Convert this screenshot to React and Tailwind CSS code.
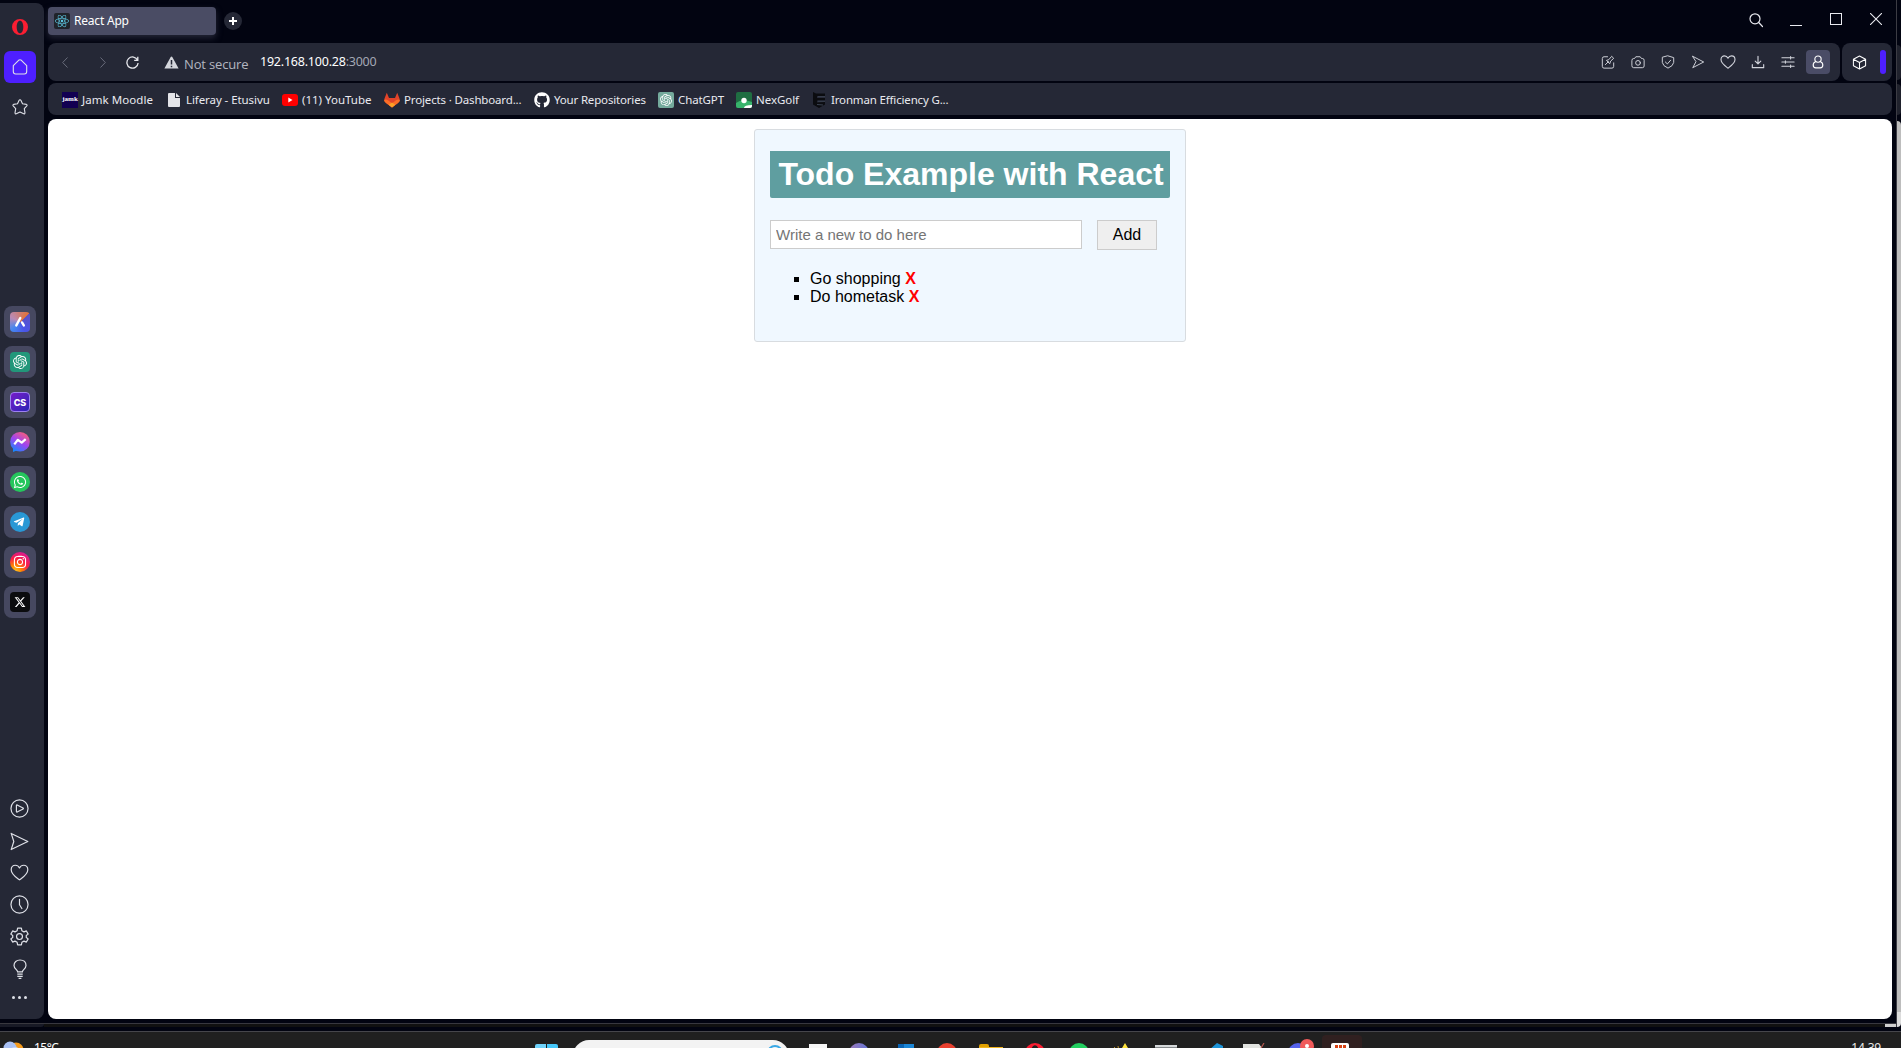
import React from "react";
import { SiOpenai } from "react-icons/si";
import { FaReact, FaWhatsapp, FaTelegramPlane, FaInstagram, FaGithub } from "react-icons/fa";
import { FaXTwitter } from "react-icons/fa6";

function Line({ size = 16, children, className = "", sw = 1.1 }) {
  return (
    <svg
      width={size}
      height={size}
      viewBox="0 0 16 16"
      fill="none"
      stroke="currentColor"
      strokeWidth={sw}
      strokeLinejoin="round"
      strokeLinecap="round"
      className={`shrink-0 ${className}`}
    >
      {children}
    </svg>
  );
}

const heart = (
  <path d="M8 14.2C6 12.6 1 9.6 1 5.6 1 3.4 2.6 1.9 4.5 1.9 6 1.9 7.3 2.8 8 4.2 8.7 2.8 10 1.9 11.5 1.9 13.4 1.9 15 3.4 15 5.6 15 9.6 10 12.6 8 14.2Z" />
);
const plane = <path d="M1 1.2 15 8 1 14.8 3.2 8Z" />;

function OperaRing({ className }) {
  return (
    <svg viewBox="0 0 16 16" className={className}>
      <path
        fillRule="evenodd"
        fill="#fa1e32"
        d="M8 0a8 8 0 1 0 0 16A8 8 0 1 0 8 0ZM8 1.7C10 1.7 11.3 4.4 11.3 8S10 14.3 8 14.3 4.7 11.6 4.7 8 6 1.7 8 1.7Z"
      />
    </svg>
  );
}

function AppTile({ children }) {
  return (
    <div className="flex h-8 w-8 items-center justify-center rounded-lg bg-[#464860]">{children}</div>
  );
}

function Sidebar() {
  return (
    <aside className="mt-[3px] flex h-[1016px] w-11 shrink-0 flex-col rounded-r-lg bg-[#252836] pl-1 text-[#dfe1e8]">
      <div className="flex h-12 w-8 items-center justify-center">
        <OperaRing className="h-4 w-4" />
      </div>
      <div className="flex h-8 w-8 items-center justify-center rounded-md bg-[#4e1fff]">
        <Line>
          <path d="M1.3 6.6 6.6 1.3Q8 .2 9.4 1.3L14.7 6.6V12.6Q14.7 15 12.3 15H3.7Q1.3 15 1.3 12.6Z" />
        </Line>
      </div>
      <div className="flex h-12 w-8 items-center justify-center">
        <Line>
          <path d="M8 .8Q8.7.8 9 1.5L10.5 4.8 14.4 5.4Q15.6 5.8 14.8 6.9L12.3 9.6 13 13.8Q13 15.2 11.7 14.8L8 13.1 4.3 14.8Q3 15.2 3 13.8L3.7 9.6 1.2 6.9Q.4 5.8 1.6 5.4L5.5 4.8 7 1.5Q7.3.8 8 .8Z" />
        </Line>
      </div>
      <div className="mt-[175px] flex flex-col gap-2">
        <AppTile>
          <div className="flex h-5 w-5 items-center justify-center rounded bg-[conic-gradient(from_45deg,#5b52c4,#4a55e8_30%,#4587f0_50%,#b98ab5_70%,#dd7340)]">
            <svg viewBox="0 0 20 20" className="h-5 w-5" fill="none" stroke="#fff" strokeWidth="2.4" strokeLinecap="round">
              <path d="M6.3 13.4 10.3 6M12 10.4 13.8 13.4" />
            </svg>
          </div>
        </AppTile>
        <AppTile>
          <div className="flex h-5 w-5 items-center justify-center rounded bg-[#22977a] text-white">
            <SiOpenai size={14} />
          </div>
        </AppTile>
        <AppTile>
          <div className="flex h-5 w-5 items-center justify-center rounded border border-[#9d82f0] bg-linear-to-br from-[#7619c9] to-[#2721b5] font-['Inter'] text-[9px] leading-none font-extrabold text-white">
            CS
          </div>
        </AppTile>
        <AppTile>
          <svg viewBox="0 0 20 20" className="h-5 w-5">
            <defs>
              <linearGradient id="msg" x1=".2" y1="1" x2=".8" y2="0">
                <stop offset="0" stopColor="#1688ff" />
                <stop offset=".5" stopColor="#a044f0" />
                <stop offset="1" stopColor="#ff5f72" />
              </linearGradient>
            </defs>
            <path d="M3 14V20L8 18Z" fill="#1688ff" />
            <circle cx="10" cy="9.8" r="9.8" fill="url(#msg)" />
            <path d="m4.3 12.4 3.6-4.6 3.8 2.9 4-3.5" fill="none" stroke="#fff" strokeWidth="2.2" strokeLinejoin="round" />
          </svg>
        </AppTile>
        <AppTile>
          <div className="flex h-5 w-5 items-center justify-center rounded-full bg-[#25c65c] text-white">
            <FaWhatsapp size={14} />
          </div>
        </AppTile>
        <AppTile>
          <div className="flex h-5 w-5 items-center justify-center rounded-full bg-[#2998d5] text-white">
            <FaTelegramPlane size={12} className="mr-0.5" />
          </div>
        </AppTile>
        <AppTile>
          <div className="flex h-5 w-5 items-center justify-center rounded-full bg-[radial-gradient(circle_at_25%_100%,#ffca28_0%,#ff8a00_25%,#fb1c48_55%,#c41bb8_100%)] text-white">
            <FaInstagram size={14} />
          </div>
        </AppTile>
        <AppTile>
          <div className="flex h-5 w-5 items-center justify-center rounded bg-[#0b0c0e] text-white">
            <FaXTwitter size={12} />
          </div>
        </AppTile>
      </div>
      <div className="mt-[181px] flex flex-col pl-1.5">
        <Line size={19} sw={1}>
          <circle cx="8" cy="8" r="7.2" />
          <path d="M5.4 5.4Q5.4 4.8 6 5L11 7.5Q11.6 8 11 8.5L6 11Q5.4 11.2 5.4 10.6Z" />
        </Line>
        <Line size={19} sw={1} className="mt-[14px]">{plane}</Line>
        <Line size={19} sw={1} className="mt-3">{heart}</Line>
        <Line size={19} sw={1} className="mt-[13px]">
          <circle cx="8" cy="8" r="7.2" />
          <path d="M8 3.6V8.2L10 11.4" />
        </Line>
        <Line size={19} sw={1} className="mt-[13px]">
          <path d="M6.4 1H9.6L10 3.1 11.8 4.1 13.8 3.3 15.3 6 13.7 7.2V8.8L15.3 10 13.8 12.7 11.8 11.9 10 12.9 9.6 15H6.4L6 12.9 4.2 11.9 2.2 12.7.7 10 2.3 8.8V7.2L.7 6 2.2 3.3 4.2 4.1 6 3.1Z" />
          <circle cx="8" cy="8" r="2.5" />
        </Line>
        <svg viewBox="0 0 14 20" className="mt-[13px] ml-[3px] h-5 w-[14px]" fill="none" stroke="currentColor" strokeWidth="1.2">
          <path d="M4.6 12.8C4.6 10.7 1 9.6 1 6.4 1 3 3.6 1 7 1S13 3 13 6.4C13 9.6 9.4 10.7 9.4 12.8ZM4.3 15.1H9.7M4.3 17.3H9.7M5.6 19.4H8.4" />
        </svg>
        <div className="mt-[17px] flex gap-[3px] pl-0.5">
          <i className="h-[3px] w-[3px] rounded-full bg-[#dfe1e8]" />
          <i className="h-[3px] w-[3px] rounded-full bg-[#dfe1e8]" />
          <i className="h-[3px] w-[3px] rounded-full bg-[#dfe1e8]" />
        </div>
      </div>
    </aside>
  );
}

function TabStrip() {
  return (
    <div className="flex h-[43px] items-start text-[#e9eaf0]">
      <div className="mt-[7px] flex h-7 w-[168px] items-center rounded bg-[#4a4c64] pl-1.5 shadow-[0_3px_6px_#252738]">
        <span className="flex h-4 w-4 items-center justify-center rounded-xs bg-[#20232a] text-[#5cc6e0]">
          <FaReact size={14} />
        </span>
        <span className="ml-1 text-[12px] tracking-[-0.2px] text-white">React App</span>
      </div>
      <div className="mt-3 ml-2 flex h-[18px] w-[18px] items-center justify-center rounded-full bg-[#252836]">
        <svg viewBox="0 0 8 8" className="h-2 w-2" stroke="#fff" strokeWidth="2">
          <path d="M4 0V8M0 4H8" />
        </svg>
      </div>
      <div className="mt-[10px] mr-[10px] ml-auto flex items-center">
        <Line size={16} sw={1.2} className="mt-0.5">
          <circle cx="7" cy="6.8" r="5" />
          <path d="M10.7 10.5 14.5 14.5" />
        </Line>
        <div className="mt-3 ml-[26px] h-px w-3 bg-[#e9eaf0]" />
        <div className="ml-7 h-3 w-3 border border-[#e9eaf0]" />
        <svg viewBox="0 0 12 12" className="ml-7 h-3 w-3" stroke="currentColor" strokeWidth="1.1">
          <path d="M0 0 12 12M12 0 0 12" />
        </svg>
      </div>
    </div>
  );
}

function Toolbar() {
  return (
    <div className="flex h-[38px] gap-[2px] text-[#d2d4dc]">
      <div className="flex flex-1 items-center rounded-lg bg-[#252836] pr-2.5 pl-[14px]">
        <svg viewBox="0 0 6 11" className="h-[11px] w-1.5 text-[#696c7b]" fill="none" stroke="currentColor">
          <path d="M5.5.5.7 5.5 5.5 10.5" />
        </svg>
        <svg viewBox="0 0 6 11" className="ml-8 h-[11px] w-1.5 text-[#696c7b]" fill="none" stroke="currentColor">
          <path d="M.5.5 5.3 5.5.5 10.5" />
        </svg>
        <svg viewBox="0 0 13 13" className="ml-5 h-[13px] w-[13px] text-[#e6e7ec]" fill="none" stroke="currentColor" strokeWidth="1.3">
          <path d="M11.6 4.2A5.6 5.6 0 1 0 12.1 7M11.8.8V4.4H8.2" />
        </svg>
        <svg viewBox="0 0 15 13" className="mt-px ml-[25px] h-[13px] w-[15px]">
          <path d="M7.5.4Q8 .4 8.3 1L14.6 12.5H.4L6.7 1Q7 .4 7.5.4Z" fill="#d4d6dc" />
          <path d="M7.5 4V8.5M7.5 9.8V11.2" stroke="#252836" strokeWidth="1.5" />
        </svg>
        <span className="mt-[5px] ml-[5px] w-[76px] font-['Open_Sans'] text-[13px] tracking-[-0.15px] whitespace-nowrap text-[#b3b6c0]">
          Not secure
        </span>
        <span className="mt-px text-[12.5px] tracking-[-0.22px] whitespace-nowrap text-white">
          192.168.100.28<span className="text-[#a3a7b4]">:3000</span>
        </span>
        <div className="ml-auto flex items-center gap-4">
          <Line size={14}>
            <path d="M7.5 2H3.5Q1.5 2 1.5 4V13Q1.5 15 3.5 15H12.5Q14.5 15 14.5 13V9M5 11 8.5 7.5M6.5 6.5 10 10 11 7 14.5 3.8 12.2 1.5 9.2 5Z" />
          </Line>
          <Line size={14}>
            <path d="M1 6Q1 4 3 4H4L5.5 2H10.5L12 4H13Q15 4 15 6V12.5Q15 14.5 13 14.5H3Q1 14.5 1 12.5Z" />
            <circle cx="8" cy="9" r="2.7" />
          </Line>
          <Line size={14}>
            <path d="M8 1 14.5 3V8.5Q14 12.5 8 15 2 12.5 1.5 8.5V3ZM5 8 7.3 10.2 11 6" />
          </Line>
          <Line size={14}><path d="M2 1.5 14.5 8 2 14.5 5.5 8Z" /></Line>
          <Line size={16} className="-mx-px">{heart}</Line>
          <Line size={14} sw={1.3}>
            <path d="M8 1.5V10M4.8 7 8 10.2 11.2 7M1.5 11V14.5H14.5V11" />
          </Line>
          <Line size={14} sw={1.2}>
            <path d="M1 3.2H15M1 8H15M1 12.8H15M11 1.8V4.6M5 6.6V9.4M11 11.4V14.2" />
          </Line>
          <div className="-ml-[5px] flex h-6 w-6 items-center justify-center rounded bg-[#4a4c66] text-white">
            <Line size={14} sw={1.3}>
              <circle cx="8" cy="4.7" r="3.6" />
              <path d="M5.5 7.4Q2.5 8.5 2.5 11.5 2.5 14.7 5.5 14.7H10.5Q13.5 14.7 13.5 11.5 13.5 8.5 10.5 7.4" />
            </Line>
          </div>
        </div>
      </div>
      <div className="flex w-[50px] items-center rounded-lg bg-[#252836] pl-2.5">
        <Line size={15} className="text-white">
          <path d="M8 1 14.5 4.5V11.5L8 15 1.5 11.5V4.5ZM1.5 4.5 8 8 14.5 4.5M8 8V15" />
        </Line>
        <div className="ml-[13px] h-6 w-1.5 rounded-sm bg-[#4e1fff]" />
      </div>
    </div>
  );
}

function Bookmark({ icon, label, className = "", text }) {
  return (
    <div className={`flex shrink-0 items-center gap-1 ${className}`}>
      <span className="flex h-4 w-4 shrink-0 items-center justify-center">{icon}</span>
      <span className={`whitespace-nowrap ${text}`}>{label}</span>
    </div>
  );
}

function Bookmarks() {
  return (
    <div className="mt-[2px] flex h-8 items-center rounded-lg bg-[#252836] pt-px pl-[14px] text-[11.5px] text-[#e9eaf0]">
      <Bookmark
        className="w-[104px]"
        text="tracking-[0.06px]"
        label="Jamk Moodle"
        icon={<span className="flex h-4 w-4 items-center justify-center bg-[#120052] font-['Liberation_Serif'] text-[7px] leading-none font-bold text-white">jamk</span>}
      />
      <Bookmark
        className="w-[116px]"
        text="tracking-[-0.08px]"
        label="Liferay - Etusivu"
        icon={
          <svg viewBox="0 0 12 14" className="h-[14px] w-3">
            <path d="M0 1Q0 0 1 0H7V5H12V13Q12 14 11 14H1Q0 14 0 13ZM8 0 12 4H8Z" fill="#e3e4e8" />
          </svg>
        }
      />
      <Bookmark
        className="w-[102px]"
        text="tracking-[0px]"
        label="(11) YouTube"
        icon={
          <svg viewBox="0 0 16 12" className="h-3 w-4">
            <rect width="16" height="12" rx="3" fill="#f00" />
            <path d="M6.3 3.5 10.5 6 6.3 8.5Z" fill="#fff" />
          </svg>
        }
      />
      <Bookmark
        className="w-[150px]"
        text="tracking-[-0.15px]"
        label="Projects · Dashboard..."
        icon={
          <svg viewBox="0 0 16 16" className="h-4 w-4">
            <path d="M2.8.8 5 6H11L13.2.8 15.5 6.5Q16.3 9 14 11L8 15.5 2 11Q-.3 9 .5 6.5Z" fill="#e24329" />
            <path d="M0 8Q2 7 4 8.3L8 11.3 12 8.3Q14 7 16 8 16 9.5 14 11L8 15.5 2 11Q0 9.5 0 8Z" fill="#fc6d26" />
            <path d="M4.8 12.8 8 10.5 11.2 12.8 8 15.5Z" fill="#fca326" />
          </svg>
        }
      />
      <Bookmark className="w-[124px]" text="tracking-[-0.17px]" label="Your Repositories" icon={<FaGithub size={16} color="#fff" />} />
      <Bookmark
        className="w-[78px]"
        text="tracking-[-0.1px]"
        label="ChatGPT"
        icon={<span className="flex h-4 w-4 items-center justify-center rounded-xs bg-[#74aa9c] text-white"><SiOpenai size={12} /></span>}
      />
      <Bookmark
        className="w-[75px]"
        text="tracking-[-0.05px]"
        label="NexGolf"
        icon={
          <svg viewBox="0 0 16 16" className="h-4 w-4">
            <rect width="16" height="16" rx="2" fill="#1f6e42" />
            <path d="M0 11Q6 6 16 10V14Q16 16 14 16H2Q0 16 0 14Z" fill="#37b36b" />
            <circle cx="8" cy="8.5" r="2.7" fill="#fff" />
            <path d="M8 16Q8 13 16 13V14Q16 16 14 16Z" fill="#fff" />
          </svg>
        }
      />
      <Bookmark
        text="tracking-[-0.16px]"
        label="Ironman Efficiency G..."
        icon={
          <svg viewBox="0 0 14 16" className="h-4 w-[14px]">
            <path d="M1 0 4 1.5H13V4H5V6H13V8.5H5V10.5L13 10V12.5L7 16 1 12.5Z" fill="#0b0c10" />
            <path d="M6 4.7H13M6 9.2H13M5 12.5 11 13" stroke="#3b4352" />
          </svg>
        }
      />
    </div>
  );
}

function TodoPage() {
  return (
    <main className="mt-1 flex h-[900px] justify-center rounded-lg bg-white pt-[10px] font-['Liberation_Sans',Arial,sans-serif] text-black">
      <div className="h-[213px] w-[432px] rounded-[3px] border border-[#d8dce0] bg-[#f0f8ff] px-[15px] pt-[21px]">
        <h1 className="h-[47px] rounded-b-xs bg-[#5f9ea0] pl-0.5 text-center text-[32px] leading-[47px] font-bold whitespace-nowrap text-white">
          Todo Example with React
        </h1>
        <div className="mt-[22px] flex items-start gap-[15px]">
          <input
            className="h-[29px] w-[312px] border border-[#ccc] bg-white px-[5px] text-[15px] placeholder:text-[#757575]"
            placeholder="Write a new to do here"
          />
          <button className="h-[30px] w-[60px] border border-[#ccc] bg-[#efefef] text-[16px] leading-none">Add</button>
        </div>
        <ul className="mt-5 list-[square] pl-10 text-[16px] leading-[18px]">
          <li>Go shopping <b className="text-[#f00]">X</b></li>
          <li>Do hometask <b className="text-[#f00]">X</b></li>
        </ul>
      </div>
    </main>
  );
}

function Taskbar() {
  return (
    <footer className="flex h-[17px] shrink-0 items-start overflow-hidden border-t border-[#46464c] bg-[#202020] text-white">
      <svg viewBox="0 0 22 16" className="mt-[9px] ml-[3px] h-4 w-[22px] shrink-0">
        <circle cx="13" cy="9" r="7.5" fill="#f59b1c" />
        <circle cx="7" cy="7" r="6.5" fill="#a9c1f4" />
        <circle cx="12" cy="12" r="6" fill="#c8d8fa" />
      </svg>
      <span className="mt-[8px] ml-[9px] w-6 shrink-0 text-[12px] leading-[16px] tracking-[-0.5px]">15°C</span>
      <div className="mt-3 ml-[477px] flex shrink-0 gap-px">
        <i className="h-3 w-[11px] rounded-tl-xs bg-[#6fd3fb]" />
        <i className="h-3 w-[11px] rounded-tr-xs bg-[#46c8fa]" />
      </div>
      <div className="mt-2 ml-[15px] flex h-8 w-[216px] shrink-0 justify-end rounded-full bg-[#f3f3f3] pt-[5px] pr-[6px]">
        <i className="h-4 w-4 rounded-full border-2 border-[#38a8e6]" />
      </div>
      <i className="mt-3 ml-5 h-4 w-[18px] shrink-0 bg-[#f6f6f6]" />
      <i className="mt-[11px] ml-[22px] h-5 w-5 shrink-0 rounded-full bg-linear-to-r from-[#9b78b8] to-[#6274d6]" />
      <i className="mt-3 ml-[29px] h-4 w-4 shrink-0 border-l-[6px] border-[#0a64b4] bg-[#1b86d6]" />
      <i className="mt-[11px] ml-[23px] h-5 w-5 shrink-0 rounded-full bg-[#e8402f]" />
      <div className="mt-3 ml-[22px] h-4 w-6 shrink-0">
        <div className="h-[3px] w-2.5 rounded-t-xs bg-[#e0a000]" />
        <div className="h-3 w-6 bg-[#f0b41e]" />
      </div>
      <OperaRing className="mt-[11px] ml-[22px] h-5 w-5 shrink-0" />
      <i className="mt-[11px] ml-6 h-5 w-5 shrink-0 rounded-full bg-[#22cf60]" />
      <svg viewBox="0 0 18 16" className="mt-[11px] ml-6 h-4 w-[18px] shrink-0">
        <path d="M12 0 15 5H18V16H6V6L9 5Z" fill="#ffe23c" />
        <path d="M1 4 5 8M5 3 6 8" stroke="#b8902a" />
      </svg>
      <i className="mt-[13px] ml-[24px] h-4 w-[22px] shrink-0 border-t-2 border-[#d5d8da] bg-[#84888b]" />
      <svg viewBox="0 0 14 16" className="mt-[11px] ml-[32px] h-4 w-[14px] shrink-0">
        <path d="M8 0 14 3V16H0V7Z" fill="#1d94d8" />
      </svg>
      <svg viewBox="0 0 22 16" className="mt-[11px] ml-[20px] h-4 w-[22px] shrink-0">
        <path d="M0 1H16L19 5V16H0Z" fill="#e2e3e0" />
        <path d="M21 0 18 5" stroke="#b5574d" strokeWidth="1.2" />
      </svg>
      <div className="mt-[7px] ml-[23px] flex h-5 w-[26px] shrink-0">
        <i className="mt-1 h-5 w-5 shrink-0 rounded-full bg-[#5562ea]" />
        <i className="-ml-2 h-[14px] w-[14px] shrink-0 rounded-full border-[5px] border-[#f05a5a] bg-white" />
      </div>
      <div className="mt-[3px] ml-[8px] flex h-6 w-10 shrink-0 justify-center rounded-t bg-[#302020] pt-2">
        <div className="-ml-1 flex h-4 w-[18px] justify-center gap-px rounded-t-xs bg-white pt-0.5">
          <i className="h-4 w-[3px] bg-[#d84315]" />
          <i className="h-4 w-[3px] bg-[#d84315]" />
          <i className="h-4 w-[3px] bg-[#d84315]" />
        </div>
      </div>
      <span className="mt-[8px] mr-[20px] ml-auto text-[12px] leading-[16px] tracking-[-0.2px] text-[#e8e8e8]">14.39</span>
    </footer>
  );
}

function WindowEdge() {
  return (
    <div className="ml-1 flex h-[1027px] w-[5px] shrink-0 flex-col rounded-tr-lg rounded-br-xl border-l border-[#3c3c44]">
      <div className="mt-[45px] h-[35px] rounded-r bg-[#20222d]" />
      <div className="mt-1 h-[31px] rounded-r bg-[#20222d]" />
      <div className="mt-[6px] h-[891px] rounded-tr bg-[#bdbdbd]" />
      <div className="flex-1 rounded-br-lg bg-[#dcdcdc]" />
    </div>
  );
}

export default function App() {
  return (
    <div className="flex h-[1048px] w-[1901px] flex-col overflow-hidden bg-[#020411] font-['Noto_Sans','Open_Sans',sans-serif]">
      <div className="flex h-[1023px]">
        <Sidebar />
        <div className="ml-1 flex w-[1844px] flex-col">
          <TabStrip />
          <Toolbar />
          <Bookmarks />
          <TodoPage />
        </div>
        <WindowEdge />
      </div>
      <div className="flex h-[4px] w-[1896px] shrink-0 border-t border-[#38383f]">
        <div className="h-[3px] w-11 rounded-br bg-[#181a26]" />
        <div className="h-[3px] flex-1 bg-[#111]" />
        <div className="h-[3px] w-[11px] bg-[#cfcfcf]" />
      </div>
      <div className="h-1 shrink-0" />
      <Taskbar />
    </div>
  );
}
